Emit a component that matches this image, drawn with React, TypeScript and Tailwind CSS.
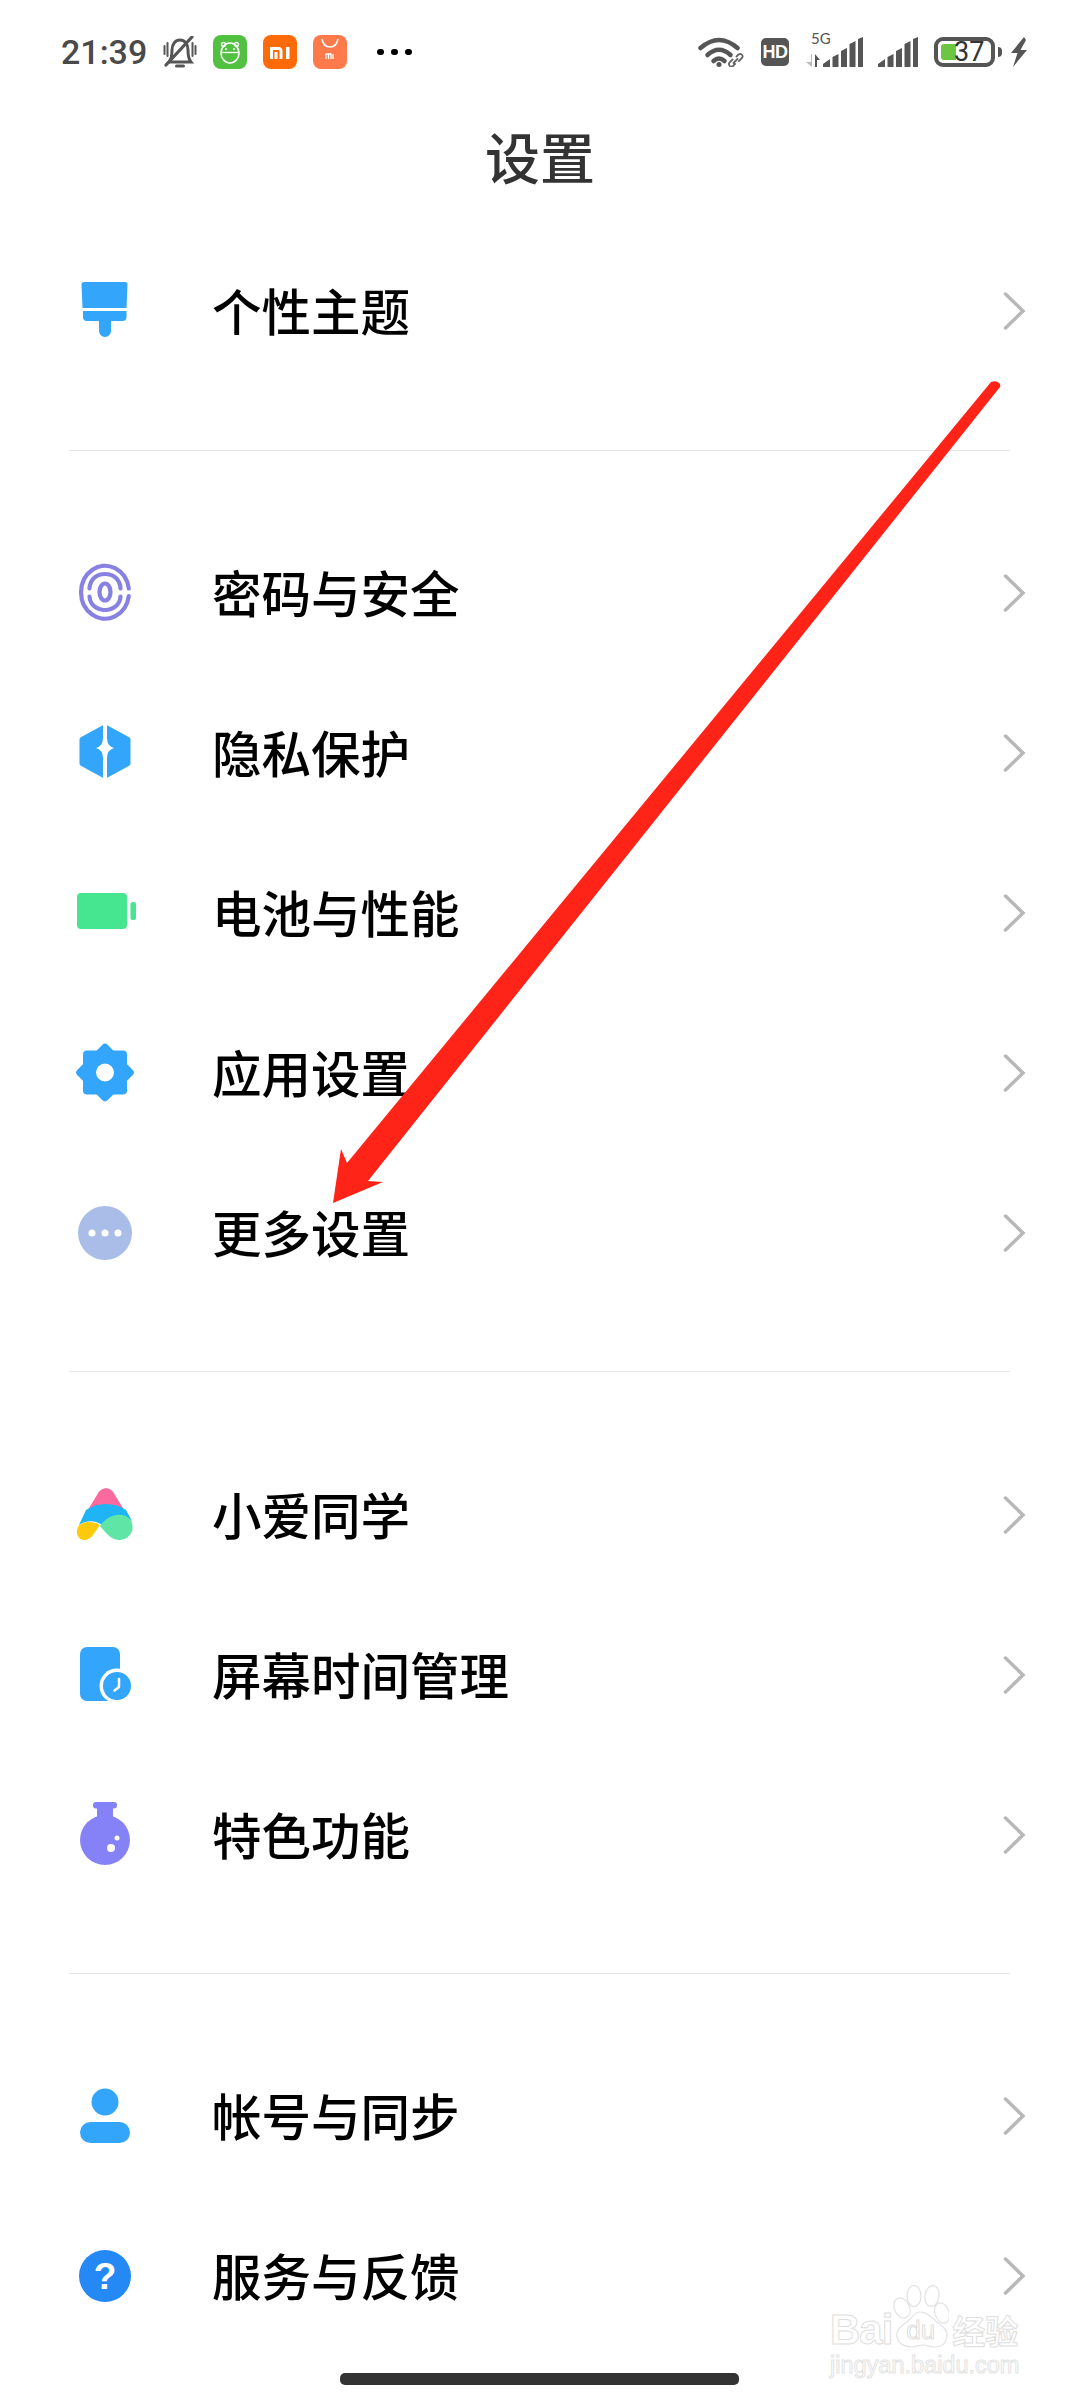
import type { ReactNode } from "react";

const BLUE = "#33a5fb";

function Brush() {
  return (
    <svg viewBox="0 0 64 64" className="h-16 w-16">
      <path d="M11 3h41a2.500 2.500 0 0 1 2.500 2.500L53.500 29H9.500L8.500 5.500A2.500 2.500 0 0 1 11 3z" fill={BLUE} />
      <path d="M10 32h43.500v6a4 4 0 0 1-4 4H38v10a6 6 0 0 1-12 0V42H14a4 4 0 0 1-4-4z" fill={BLUE} />
    </svg>
  );
}

function Fingerprint() {
  return (
    <svg viewBox="0 0 64 64" className="h-16 w-16" fill="none" stroke="#8781e3" strokeWidth="4.200" strokeLinecap="round">
      <path d="M55.800 35A24 26.500 0 1 1 55.800 27.500" />
      <path d="M16.500 27.500C17 18 24 13 32 13s15 5 15.500 14.500" />
      <path d="M47.500 35.500C47 44 40 49 32 49s-15-5-15.500-13.500" />
      <ellipse cx="32" cy="31" rx="5.500" ry="8.500" />
    </svg>
  );
}

function Privacy() {
  return (
    <svg viewBox="0 0 64 64" className="h-16 w-16">
      <path d="M32 6 55 18.500V42.500L32 55 9 42.500V18.500Z" fill={BLUE} stroke={BLUE} strokeWidth="5" strokeLinejoin="round" />
      <path d="M30 0h4v17q0 8 7 10-7 2-7 10v27h-4V37q0-8-7-10 7-2 7-10z" fill="#fff" />
    </svg>
  );
}

function Battery() {
  return (
    <svg viewBox="0 0 64 64" className="h-16 w-16">
      <rect x="4" y="12" width="50" height="36" rx="4" fill="#46e691" />
      <rect x="57.500" y="21" width="5.500" height="18" rx="2" fill="#46e691" />
    </svg>
  );
}

function Gear() {
  return (
    <svg viewBox="0 0 64 64" className="h-16 w-16">
      <rect x="10" y="9.500" width="44" height="44" rx="4" fill={BLUE} />
      <rect x="10.500" y="10" width="43" height="43" rx="4" fill={BLUE} transform="rotate(45 32 31.500)" />
      <circle cx="32" cy="31.500" r="9" fill="#fff" />
    </svg>
  );
}

function More() {
  return (
    <svg viewBox="0 0 64 64" className="h-16 w-16">
      <circle cx="32" cy="32" r="27" fill="#a9bde8" />
      <circle cx="19" cy="32" r="3.500" fill="#fff" />
      <circle cx="32" cy="32" r="3.500" fill="#fff" />
      <circle cx="45" cy="32" r="3.500" fill="#fff" />
    </svg>
  );
}

function XiaoAi() {
  return (
    <svg viewBox="0 0 64 64" className="h-16 w-16">
      <path d="M24 12C28 3 38 3 42 12L53 30C42 20 24 20 13 30Z" fill="#fb6a9f" />
      <path d="M13 27C24 19 42 19 53 27L59 38C50 30 38 31 29 42C24 38 14 36 6 42Z" fill="#1fb4f5" />
      <path d="M27 43C36 30 50 29 57 36C63 44 58 57 47 57C38 57 34 51 27 43Z" fill="#5fe6a6" />
      <path d="M5 44C8 39 18 37 27 42L20 52C15 59 7 58 5 53C3 50 4 46 5 44Z" fill="#fcca0a" />
    </svg>
  );
}

function ScreenTime() {
  return (
    <svg viewBox="0 0 64 64" className="h-16 w-16">
      <rect x="7" y="4" width="40" height="54" rx="7" fill={BLUE} />
      <circle cx="44" cy="43" r="17.500" fill="#fff" />
      <circle cx="44" cy="43" r="14" fill={BLUE} />
      <path d="M46 36v8l-4.500 3.500" fill="none" stroke="#fff" strokeWidth="2.500" strokeLinecap="round" strokeLinejoin="round" />
    </svg>
  );
}

function Flask() {
  return (
    <svg viewBox="0 0 64 64" className="h-16 w-16 overflow-visible">
      <rect x="20" y="-1" width="24" height="6.500" rx="3" fill="#8582f7" />
      <rect x="24" y="4" width="16" height="22" fill="#8582f7" />
      <circle cx="32" cy="37" r="25" fill="#8582f7" />
      <circle cx="38" cy="45" r="4" fill="#fff" />
      <circle cx="44" cy="35" r="2.500" fill="#fff" />
    </svg>
  );
}

function Person() {
  return (
    <svg viewBox="0 0 64 64" className="h-16 w-16">
      <circle cx="32" cy="18" r="13.500" fill={BLUE} />
      <rect x="7" y="38" width="50" height="21" rx="10.500" fill={BLUE} />
    </svg>
  );
}

function Help() {
  return (
    <svg viewBox="0 0 64 64" className="h-16 w-16">
      <circle cx="32" cy="32" r="26" fill="#2489f5" />
      <text x="32" y="45" textAnchor="middle" fill="#fff" fontSize="37" fontWeight="700" fontFamily="'Liberation Sans', sans-serif">?</text>
    </svg>
  );
}

function Chevron() {
  return (
    <svg viewBox="0 0 24 40" className="h-10 w-6">
      <path d="M3.500 3 21 20 3.500 37" fill="none" stroke="#b8b8b8" strokeWidth="3.500" strokeLinecap="round" strokeLinejoin="miter" />
    </svg>
  );
}

function Row({ icon, label }: { icon: ReactNode; label: string }) {
  return (
    <div className="flex h-[160px] items-center pl-[73px] pr-[54px]">
      {icon}
      <span className="ml-[75px] flex-1 pb-[3px] text-[49.500px] font-medium leading-none text-black">{label}</span>
      <Chevron />
    </div>
  );
}

function Divider() {
  return <div className="mb-[62px] ml-[69px] mr-[70px] mt-[58px] h-px bg-[#e6e6e6]" />;
}

function Signal() {
  return (
    <svg viewBox="0 0 40 30" className="h-[30px] w-10" fill="#555">
      <path d="M0 30V27L7 22V30Z" />
      <path d="M9.500 30V20L15.500 17V30Z" />
      <path d="M18 30V14L24 11V30Z" />
      <path d="M26.500 30V7L32.500 4V30Z" />
      <path d="M35 30V2L40 0V30Z" />
    </svg>
  );
}

function StatusBar() {
  return (
    <div className="flex h-[104px] items-center justify-between pl-[61px] pr-[52px]">
      <div className="flex items-center">
        <span className="w-[86px] font-['Roboto',sans-serif] text-[34px] font-medium leading-none text-[#4a4a4a]">21:39</span>
        <svg viewBox="0 0 34 32" className="ml-4 h-8 w-[34px]" fill="none" stroke="#555" strokeWidth="3" strokeLinecap="round">
          <path d="M6 26c2.500-3 3-6 3-12C9 8 12.500 4 17 4s8 4 8 10c0 6 .5 9 3 12z" />
          <path d="M13.500 30h7" strokeWidth="3" />
          <path d="M1.500 10v8M4.500 7v13M32.500 10v8M29.500 7v13" strokeWidth="2" />
          <path d="M29 1 3 29" strokeWidth="3.200" />
        </svg>
        <svg viewBox="0 0 34 34" className="ml-4 h-[34px] w-[34px]">
          <rect width="34" height="34" rx="8" fill="#52c041" />
          <ellipse cx="17" cy="18" rx="9" ry="10" fill="none" stroke="#fff" strokeWidth="1.600" />
          <path d="M8.500 17.500h17" stroke="#fff" strokeWidth="1.300" />
          <circle cx="10.500" cy="9.500" r="2" fill="none" stroke="#fff" strokeWidth="1.300" />
          <circle cx="23.500" cy="9.500" r="2" fill="none" stroke="#fff" strokeWidth="1.300" />
          <circle cx="13" cy="14" r="1" fill="#fff" />
          <circle cx="21" cy="14" r="1" fill="#fff" />
        </svg>
        <svg viewBox="0 0 34 34" className="ml-4 h-[34px] w-[34px]">
          <rect width="34" height="34" rx="8" fill="#ff6a08" />
          <path d="M7 24V12h8.500c2.500 0 4 1.500 4 4v8h-3v-8c0-.7-.3-1-1-1H10v9zM11.500 24v-7h3v7zM23 12h3.500v12H23z" fill="#fff" />
        </svg>
        <svg viewBox="0 0 34 34" className="ml-4 h-[34px] w-[34px]">
          <rect width="34" height="34" rx="8" fill="#ff7a4a" />
          <path d="M9 4c1 5 4 8 8 8s7-3 8-8" fill="none" stroke="#fff" strokeWidth="1.500" />
          <path d="M13 24v-5h5v5M15.500 19.500V24M20 19v5" fill="none" stroke="#fff" strokeWidth="1.300" />
        </svg>
        <div className="ml-[30px] flex gap-[7.500px]">
          <span className="h-[6.500px] w-[6.500px] rounded-full bg-black" />
          <span className="h-[6.500px] w-[6.500px] rounded-full bg-black" />
          <span className="h-[6.500px] w-[6.500px] rounded-full bg-black" />
        </div>
      </div>
      <div className="flex items-center">
        <svg viewBox="0 0 47 30" className="h-[30px] w-[47px]" fill="none" stroke="#555" strokeWidth="4.500" strokeLinecap="round">
          <path d="M2.500 11Q21-5 39.500 11" />
          <path d="M9.500 18Q21 7.500 32.500 18" />
          <path d="M15.500 24Q21 19 26.500 24" />
          <circle cx="21" cy="27.500" r="2.500" fill="#555" stroke="none" />
          <path d="M35.500 26l4-4M34.500 22.500l-3 3a2.500 2.500 0 0 0 3.500 3.500l2-2M41 24l3-3a2.500 2.500 0 0 0-3.500-3.500l-2 2" stroke="#666" strokeWidth="1.800" />
        </svg>
        <span className="ml-4 flex h-7 w-7 items-center justify-center rounded-[5px] bg-[#555] font-['Liberation_Sans',sans-serif] text-[18px] font-bold leading-none tracking-[-0.5px] text-white">HD</span>
        <div className="relative ml-[17px] flex h-[30px] w-[57px] items-end justify-end">
          <span className="absolute left-[5px] top-[-6px] font-['Lato',sans-serif] text-[15px] leading-none text-[#555]">5G</span>
          <svg viewBox="0 0 14 13" className="absolute bottom-0 left-0 h-[13px] w-[14px]">
            <path d="M0 8h5V0h1v13z" fill="#bbb" />
            <path d="M9 0l5 6h-3v7H9z" fill="#555" />
          </svg>
          <Signal />
        </div>
        <div className="ml-[15px]">
          <Signal />
        </div>
        <div className="ml-4 flex items-center gap-[3px]">
          <div className="flex h-[30px] w-[61px] items-center rounded-[9px] border-4 border-[#555] pl-[3px]">
            <div className="h-4 w-[15px] rounded-l-[3px] bg-[#6cc644]" />
            <span className="ml-[-2px] font-['Roboto',sans-serif] text-[27px] leading-none text-[#333]">37</span>
          </div>
          <div className="h-[10px] w-1 rounded-r-sm bg-[#555]" />
        </div>
        <svg viewBox="0 0 18 30" className="ml-2 h-[30px] w-[18px]" fill="#555">
          <path d="M14 0 1 16 7.500 16 3 30 17 13 10.500 13 16 3Z" />
        </svg>
      </div>
    </div>
  );
}

function Watermark() {
  return (
    <div className="absolute left-[830px] top-[2285px] w-[192px] select-none font-['Liberation_Sans',sans-serif]">
      <div className="flex items-end">
        <span className="text-[42px] font-bold leading-[38px] tracking-[-1px] text-transparent [-webkit-text-stroke:1px_#dedede]">Bai</span>
        <div className="relative ml-[1px] h-[64px] w-[56px] shrink-0">
          <svg viewBox="0 0 56 64" className="h-16 w-14" fill="none" stroke="#e2e2e2" strokeWidth="1.200">
            <ellipse cx="9" cy="23" rx="7.500" ry="10.500" transform="rotate(-25 9 23)" />
            <ellipse cx="21" cy="11" rx="7" ry="10.500" />
            <ellipse cx="39" cy="11" rx="7" ry="10.500" transform="rotate(8 39 11)" />
            <ellipse cx="49" cy="28" rx="7" ry="10.500" transform="rotate(-20 49 28)" />
            <path d="M27 27c-6 0-8 6-13 10C8 41 3 45 4 52c1 7 8 10 15 10 5 0 7-2 11-2s7 2 12 2c7 0 11-4 12-10 1-7-5-11-10-15-5-4-9-10-17-10z" />
          </svg>
          <span className="absolute bottom-[6px] left-[13px] text-[26px] leading-none text-transparent [-webkit-text-stroke:1px_#dedede]">du</span>
        </div>
        <span className="ml-[3px] font-['Noto_Sans_CJK_SC',sans-serif] text-[33px] font-bold leading-[38px] text-transparent [-webkit-text-stroke:1px_#dedede]">经验</span>
      </div>
      <div className="mt-[3px] text-[23.500px] leading-[26px] text-transparent [-webkit-text-stroke:1px_#e4e4e4]">jingyan.baidu.com</div>
    </div>
  );
}

export default function App() {
  return (
    <div className="relative h-[2400px] w-[1080px] overflow-hidden bg-white font-['Noto_Sans_CJK_SC',sans-serif]">
      <StatusBar />
      <h1 className="flex h-[106px] items-center justify-center pb-[3px] text-[55px] font-medium leading-none text-[#333]">设置</h1>

      <div className="mt-[21px] pb-px">
        <Row icon={<Brush />} label="个性主题" />
      </div>
      <Divider />
      <Row icon={<Fingerprint />} label="密码与安全" />
      <Row icon={<Privacy />} label="隐私保护" />
      <Row icon={<Battery />} label="电池与性能" />
      <Row icon={<Gear />} label="应用设置" />
      <Row icon={<More />} label="更多设置" />
      <Divider />
      <div className="pt-px">
        <Row icon={<XiaoAi />} label="小爱同学" />
        <Row icon={<ScreenTime />} label="屏幕时间管理" />
        <Row icon={<Flask />} label="特色功能" />
      </div>
      <Divider />
      <Row icon={<Person />} label="帐号与同步" />
      <Row icon={<Help />} label="服务与反馈" />

      <Watermark />

      {/* red annotation arrow */}
      <svg viewBox="0 0 1080 2400" className="pointer-events-none absolute left-0 top-0 h-[2400px] w-[1080px]">
        <path d="M991 382Q996 380 999 383Q1001 385 1000 387L368 1181 383 1182 333 1203 341 1149 347 1163Z" fill="#ff2318" />
      </svg>

      <div className="absolute left-[340px] top-[2373px] h-3 w-[399px] rounded-[5px] bg-[#333]" />
    </div>
  );
}
